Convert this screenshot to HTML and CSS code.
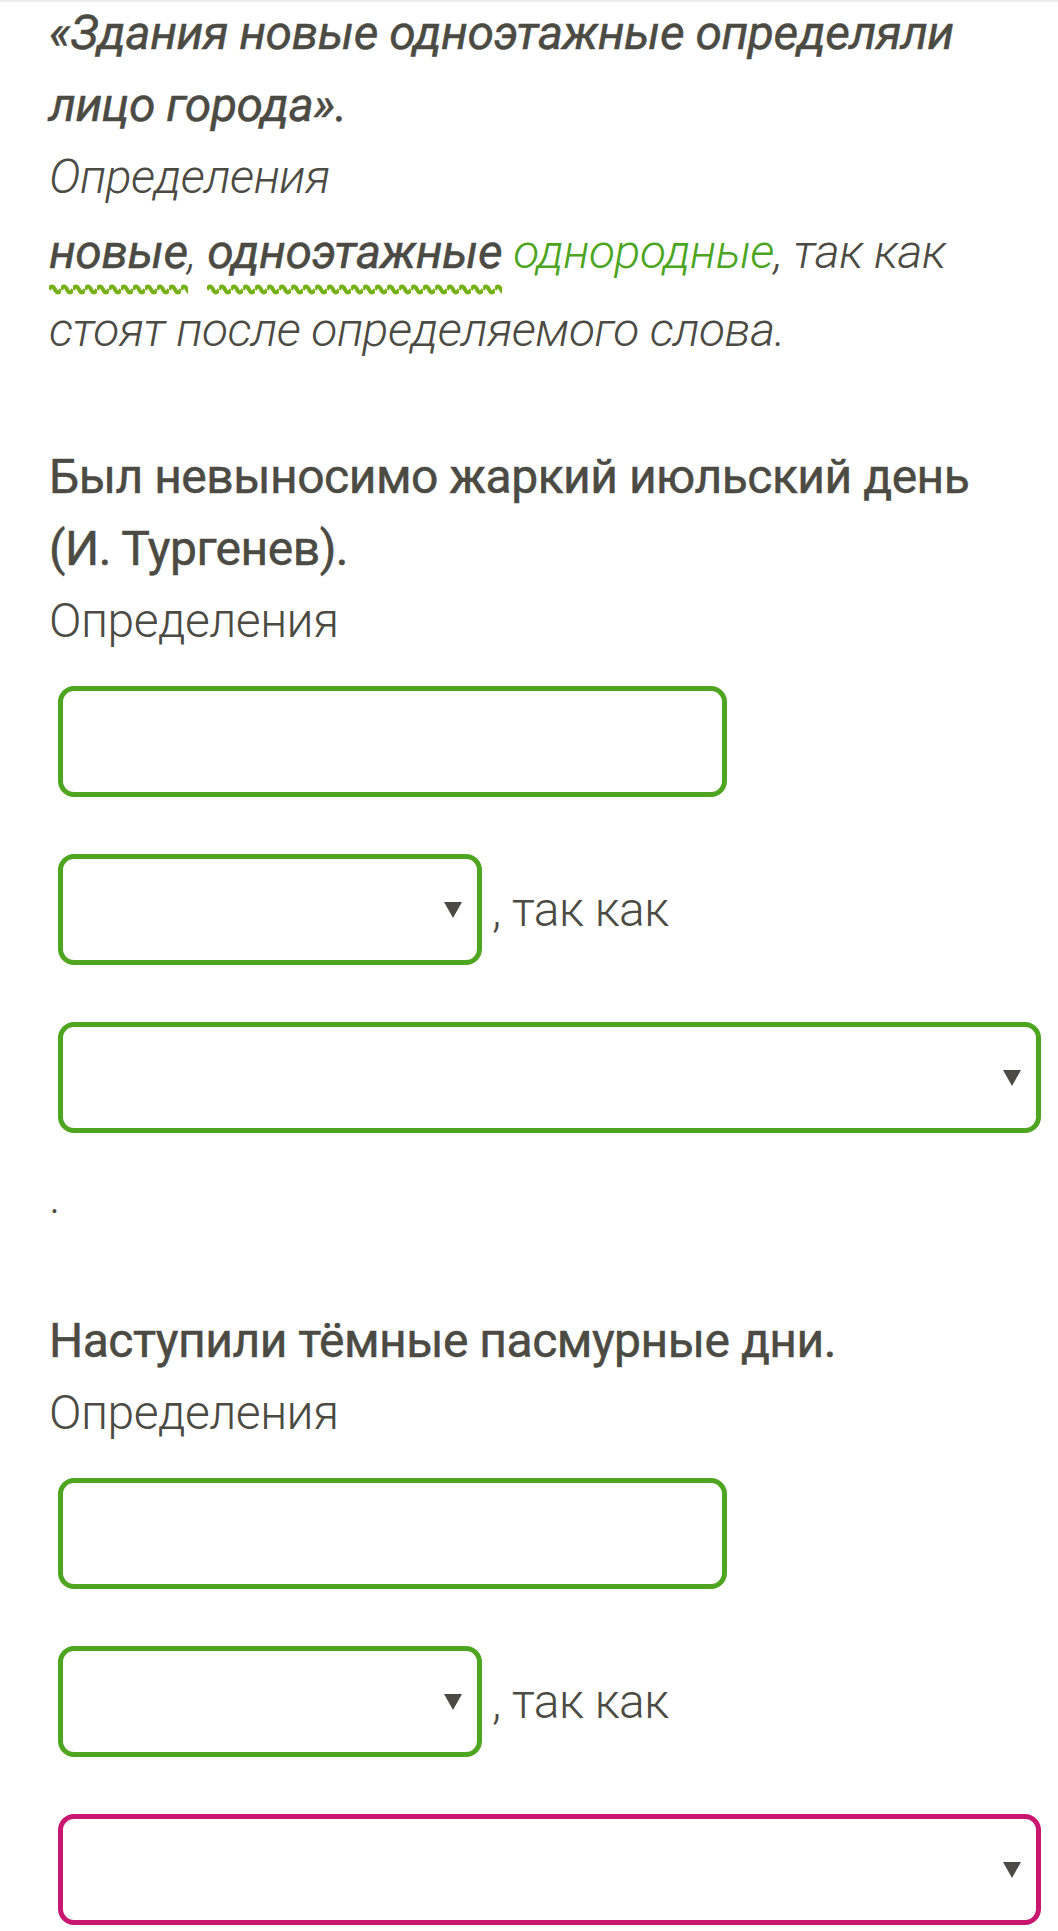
FILE: index.html
```html
<!DOCTYPE html>
<html>
<head>
    <meta charset="UTF-8">
    <title>Однородные и неоднородные определения</title>
    <link rel="stylesheet" href="styles.css">
</head>
<body>

    <div class="task example">
        <p class="sentence">«Здания новые одноэтажные определяли лицо города».</p>
        <div class="label">Определения</div>
        <p class="answer"><span class="wavy">новые</span>, <span class="wavy">одноэтажные</span> <span class="hint">однородные</span>, так как стоят после определяемого слова.</p>
    </div>

    <div class="task">
        <p class="sentence">Был невыносимо жаркий июльский день (И. Тургенев).</p>
        <div class="label">Определения</div>
        <input type="text" class="box words">
        <div class="row">
            <div class="box select short"><select></select><span class="arrow"></span></div>
            <span class="after">, так как</span>
        </div>
        <div class="box select full"><select></select><span class="arrow"></span></div>
        <div class="end">.</div>
    </div>

    <div class="task">
        <p class="sentence">Наступили тёмные пасмурные дни.</p>
        <div class="label">Определения</div>
        <input type="text" class="box words">
        <div class="row">
            <div class="box select short"><select></select><span class="arrow"></span></div>
            <span class="after">, так как</span>
        </div>
        <div class="box select full wrong"><select></select><span class="arrow"></span></div>
    </div>

</body>
</html>
```

FILE: styles.css
```css
body {
    margin: 0;
    padding: 0 17px 0 49px;
    border-top: 2px solid #ececec;
    font-family: Roboto, "Noto Sans", sans-serif;
    font-size: 48px;
    letter-spacing: -0.5px;
    line-height: 72px;
    color: #4b4b43;
    background: #fff;
}

.task {
    margin-bottom: 72px;
}

.task:first-child {
    margin-top: -5px;
}

.sentence {
    max-width: 960px;
    margin: 0;
    font-weight: 400;
    -webkit-text-stroke: 0.5px #4b4b43;
}

.label {
    font-weight: 300;
}

.example {
    font-style: italic;
}

.answer {
    margin: 0;
    font-weight: 300;
    line-height: 78px;
}

/* green wavy line under the checked words */
.wavy {
    padding-bottom: 16px;
    font-weight: 400;
    -webkit-text-stroke: 0.5px #4b4b43;
    background: url("data:image/svg+xml,%3Csvg xmlns='http://www.w3.org/2000/svg' width='12' height='13'%3E%3Cpath d='M0 6.5 Q3 0.5 6 6.5 T12 6.5' fill='none' stroke='%2374b016' stroke-width='4'/%3E%3C/svg%3E") left bottom / 12px 13px repeat-x;
}

.hint {
    color: #4ca51f;
}

/* answer fields */
.box {
    display: block;
    box-sizing: border-box;
    height: 111px;
    margin: 57px 0 0 9px;
    border: 5px solid #4ea520;
    border-radius: 16px;
    background: #fff;
}

.words {
    width: 669px;
    margin-top: 29px;
    font: inherit;
    outline: none;
}

.select {
    display: flex;
    align-items: center;
    padding-right: 15px;
}

.select select {
    flex: 1;
    height: 100%;
    border: none;
    background: transparent;
    appearance: none;
    outline: none;
}

.arrow {
    width: 0;
    height: 0;
    border-left: 9px solid transparent;
    border-right: 9px solid transparent;
    border-top: 16px solid #4b4b43;
}

.short {
    width: 424px;
}

.full {
    width: calc(100% - 9px);
}

.wrong {
    border-color: #c8176f;
}

.row {
    display: flex;
    align-items: center;
    margin-top: 57px;
}

.row .box {
    margin-top: 0;
}

.after {
    margin-left: 10px;
    font-weight: 300;
}

.end {
    margin-top: 28px;
    font-weight: 300;
}
```
